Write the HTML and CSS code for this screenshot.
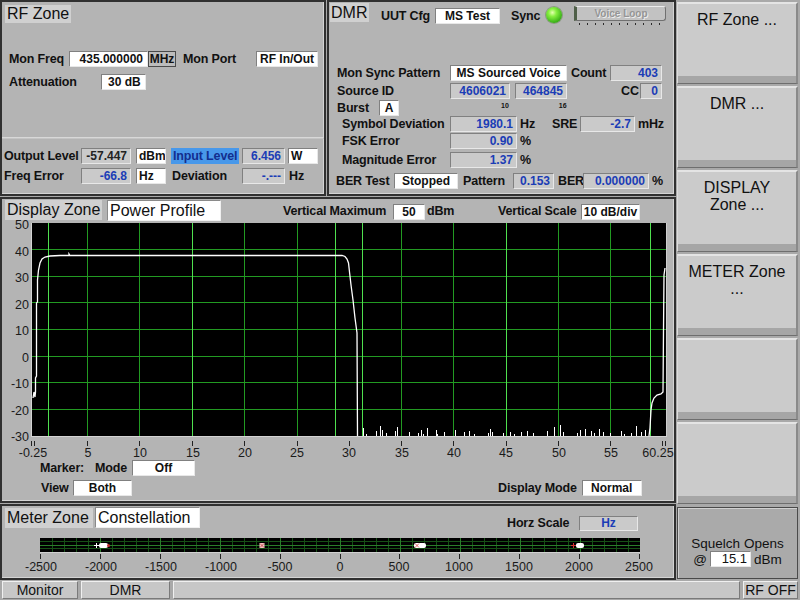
FILE: index.html
```html
<!DOCTYPE html>
<html lang="en">
<head>
<meta charset="utf-8">
<title>DMR Monitor</title>
<link rel="stylesheet" href="styles.css">
</head>
<body>
<div class="screen">
  <div class="leftcol">
    <div class="toprow">
      <section class="panel rf">
        <div class="title t-rf">RF Zone</div>
        <div class="row rf-r1">
          <span class="lbl w60">Mon Freq</span>
          <span class="box white num w79">435.000000</span>
          <span class="unitbtn w28">MHz</span>
          <span class="lbl w73 ml7">Mon Port</span>
          <span class="box white w62">RF In/Out</span>
        </div>
        <div class="row rf-r2">
          <span class="lbl w92">Attenuation</span>
          <span class="box white left6 w45">30 dB</span>
        </div>
        <div class="sep"></div>
        <div class="row rf-r3">
          <span class="lbl w77">Output Level</span>
          <span class="box gray dark w50">-57.447</span>
          <span class="box white left2 w30 ml5">dBm</span>
          <span class="hl w68 ml5">Input Level</span>
          <span class="box gray w43 ml3">6.456</span>
          <span class="box white left2 w30 ml3">W</span>
        </div>
        <div class="row rf-r4">
          <span class="lbl w77">Freq Error</span>
          <span class="box gray w50">-66.8</span>
          <span class="box white left2 w30 ml5">Hz</span>
          <span class="lbl w71 ml5 pl1">Deviation</span>
          <span class="box gray w43">-.---</span>
          <span class="lbl ml4">Hz</span>
        </div>
      </section>

      <section class="panel dmr">
        <div class="dmr-head">
          <div class="title t-dmr">DMR</div>
          <span class="lbl w54 ml12 hd">UUT Cfg</span>
          <span class="box white w65 hd">MS Test</span>
          <span class="lbl w29 ml11 hd">Sync</span>
          <span class="led"></span>
          <div class="vloop">
            <div class="vl-btn">Voice Loop</div>
            <div class="vl-ticks"></div>
          </div>
        </div>
        <div class="row d-a d-r1">
          <span class="lbl w113">Mon Sync Pattern</span>
          <span class="box white w117">MS Sourced Voice</span>
          <span class="lbl w39 ml4">Count</span>
          <span class="box gray w52">403</span>
        </div>
        <div class="row d-a d-r2">
          <span class="lbl w113">Source ID</span>
          <span class="box gray w60">4606021</span>
          <span class="box gray w52 ml5">464845</span>
          <span class="lbl w19 ml54">CC</span>
          <span class="box gray w22">0</span>
        </div>
        <div class="row d-a d-r3">
          <span class="lbl w42">Burst</span>
          <span class="box white w20">A</span>
          <span class="sup sup10">10</span>
          <span class="sup sup16">16</span>
        </div>
        <div class="row d-b d-r4">
          <span class="lbl w108">Symbol Deviation</span>
          <span class="box gray w67">1980.1</span>
          <span class="lbl w32 ml3">Hz</span>
          <span class="lbl w28">SRE</span>
          <span class="box gray w55">-2.7</span>
          <span class="lbl ml3">mHz</span>
        </div>
        <div class="row d-b d-r5">
          <span class="lbl w108">FSK Error</span>
          <span class="box gray w67">0.90</span>
          <span class="lbl ml3">%</span>
        </div>
        <div class="row d-b d-r6">
          <span class="lbl w108">Magnitude Error</span>
          <span class="box gray w67">1.37</span>
          <span class="lbl ml3">%</span>
        </div>
        <div class="row d-c d-r7">
          <span class="lbl w58">BER Test</span>
          <span class="box white w64">Stopped</span>
          <span class="lbl w50 ml5">Pattern</span>
          <span class="box gray w41">0.153</span>
          <span class="lbl w25 ml4">BER</span>
          <span class="box gray w66">0.000000</span>
          <span class="lbl ml3">%</span>
        </div>
      </section>
    </div>

    <section class="panel display">
      <div class="disp-head">
        <div class="title t-disp">Display Zone</div>
        <div class="namebox w114 ml5">Power Profile</div>
        <span class="lbl w110 ml62 hd2">Vertical Maximum</span>
        <span class="box white w32 hd3">50</span>
        <span class="lbl w71 ml2 hd2">dBm</span>
        <span class="lbl w83 hd2">Vertical Scale</span>
        <span class="box white w59 tight hd3">10 dB/div</span>
      </div>
      <svg class="chart" width="672" height="238" viewBox="2 221 672 238">
        <rect x="32" y="223" width="634" height="213" fill="#000"/>
        <line x1="31.5" y1="223" x2="31.5" y2="437" stroke="#d4d4d4"/>
        <line x1="32" y1="436.5" x2="666" y2="436.5" stroke="#d4d4d4"/>
        <line x1="666.5" y1="223" x2="666.5" y2="437" stroke="#cfcfcf"/>
        <g stroke="#229a22" stroke-width="1">
          <line x1="32" y1="249.5" x2="666" y2="249.5"/>
          <line x1="32" y1="276.5" x2="666" y2="276.5"/>
          <line x1="32" y1="302.5" x2="666" y2="302.5"/>
          <line x1="32" y1="329.5" x2="666" y2="329.5"/>
          <line x1="32" y1="356.5" x2="666" y2="356.5"/>
          <line x1="32" y1="382.5" x2="666" y2="382.5"/>
          <line x1="32" y1="409.5" x2="666" y2="409.5"/>
          <line x1="87.5" y1="223" x2="87.5" y2="436"/>
          <line x1="139.5" y1="223" x2="139.5" y2="436"/>
          <line x1="244.5" y1="223" x2="244.5" y2="436"/>
          <line x1="297.5" y1="223" x2="297.5" y2="436"/>
          <line x1="401.5" y1="223" x2="401.5" y2="436"/>
          <line x1="453.5" y1="223" x2="453.5" y2="436"/>
          <line x1="558.5" y1="223" x2="558.5" y2="436"/>
          <line x1="610.5" y1="223" x2="610.5" y2="436"/>
        </g>
        <g stroke="#4fe04f" stroke-width="1">
          <line x1="48.5" y1="223" x2="48.5" y2="436"/>
          <line x1="192.5" y1="223" x2="192.5" y2="436"/>
          <line x1="335.5" y1="223" x2="335.5" y2="436"/>
          <line x1="362.5" y1="223" x2="362.5" y2="436"/>
          <line x1="506.5" y1="223" x2="506.5" y2="436"/>
          <line x1="650.5" y1="223" x2="650.5" y2="436"/>
        </g>
        <polyline fill="none" stroke="#fff" stroke-width="1.3" points="33,398 34,392 35,397 35.5,392 35.5,378 36.5,376 36.5,303 37.5,302 37.5,280 38.5,270 40,263 42,259 45,257 50,256 60,255.5 69,255.5 69,254 70,255.5 200,255.5 342,255.5 345,256.5 347,259 348.5,263 349.5,272 351,285 353,300 355,318 357,333 357.5,436"/>
        <polyline fill="none" stroke="#fff" stroke-width="1.3" points="649,436 650,428 651,410 652,403 654,398 657,395 661,394 663,392 663.5,330 664,275 665,268"/>
        <path fill="none" stroke="#fff" stroke-width="1" d="M363.5 436V428M366.5 436V434M376.5 436V431M380.5 436V426M382.5 436V430M386.5 436V433M395.5 436V431M397.5 436V427M409.5 436V432M418.5 436V433M421.5 436V430M423.5 436V434M427.5 436V428M436.5 436V430M437.5 436V434M444.5 436V432M455.5 436V430M464.5 436V432M469.5 436V431M474.5 436V434M488.5 436V433M490.5 436V429M492.5 436V432M503.5 436V433M510.5 436V432M514.5 436V434M521.5 436V432M527.5 436V431M533.5 436V433M547.5 436V431M554.5 436V427M560.5 436V425M563.5 436V432M577.5 436V433M580.5 436V430M585.5 436V429M591.5 436V431M594.5 436V433M599.5 436V429M603.5 436V432M610.5 436V433M621.5 436V431M624.5 436V434M631.5 436V433M636.5 436V426M641.5 436V432M645.5 436V430"/>
        <g class="ylab" text-anchor="end">
          <text x="29" y="229">50</text>
          <text x="29" y="255.5">40</text>
          <text x="29" y="282">30</text>
          <text x="29" y="308.5">20</text>
          <text x="29" y="335">10</text>
          <text x="29" y="361.5">0</text>
          <text x="29" y="388">-10</text>
          <text x="29" y="414.5">-20</text>
          <text x="29" y="441">-30</text>
        </g>
        <g stroke="#222" stroke-width="1">
          <line x1="31.5" y1="441" x2="31.5" y2="446"/>
          <line x1="34.5" y1="441" x2="34.5" y2="446"/>
          <line x1="87.5" y1="441" x2="87.5" y2="446"/>
          <line x1="139.5" y1="441" x2="139.5" y2="446"/>
          <line x1="192.5" y1="441" x2="192.5" y2="446"/>
          <line x1="244.5" y1="441" x2="244.5" y2="446"/>
          <line x1="297.5" y1="441" x2="297.5" y2="446"/>
          <line x1="349.5" y1="441" x2="349.5" y2="446"/>
          <line x1="401.5" y1="441" x2="401.5" y2="446"/>
          <line x1="453.5" y1="441" x2="453.5" y2="446"/>
          <line x1="506.5" y1="441" x2="506.5" y2="446"/>
          <line x1="558.5" y1="441" x2="558.5" y2="446"/>
          <line x1="610.5" y1="441" x2="610.5" y2="446"/>
          <line x1="662.5" y1="441" x2="662.5" y2="446"/>
          <line x1="665.5" y1="441" x2="665.5" y2="446"/>
        </g>
        <g class="xlab" text-anchor="middle">
          <text x="33" y="457">-0.25</text>
          <text x="88" y="457">5</text>
          <text x="140" y="457">10</text>
          <text x="193" y="457">15</text>
          <text x="245" y="457">20</text>
          <text x="297" y="457">25</text>
          <text x="349" y="457">30</text>
          <text x="402" y="457">35</text>
          <text x="454" y="457">40</text>
          <text x="506" y="457">45</text>
          <text x="559" y="457">50</text>
          <text x="611" y="457">55</text>
          <text x="658" y="457">60.25</text>
        </g>
      </svg>
      <div class="row mk-r1">
        <span class="lbl w55">Marker:</span>
        <span class="lbl w37">Mode</span>
        <span class="box white w63">Off</span>
      </div>
      <div class="row mk-r2">
        <span class="lbl w32">View</span>
        <span class="box white w59">Both</span>
        <span class="lbl w84 ml366">Display Mode</span>
        <span class="box white left8 w60">Normal</span>
      </div>
    </section>

    <section class="panel meter">
      <div class="meter-head">
        <div class="title t-meter">Meter Zone</div>
        <div class="namebox w105 ml2">Constellation</div>
        <span class="lbl w72 ml307 hz-l">Horz Scale</span>
        <span class="box gray center w59 hz-b">Hz</span>
      </div>
      <svg class="mbar" width="672" height="44" viewBox="2 532 672 44">
        <rect x="40" y="538" width="600" height="14" fill="#000"/>
        <g stroke="#164f16" stroke-width="1">
          <line x1="40" y1="541.5" x2="640" y2="541.5"/>
          <line x1="40" y1="548.5" x2="640" y2="548.5"/>
          <path d="M52.5 538v14M64.5 538v14M76.5 538v14M88.5 538v14M112.5 538v14M124.5 538v14M136.5 538v14M148.5 538v14M172.5 538v14M184.5 538v14M196.5 538v14M208.5 538v14M232.5 538v14M244.5 538v14M256.5 538v14M268.5 538v14M292.5 538v14M304.5 538v14M316.5 538v14M328.5 538v14M352.5 538v14M364.5 538v14M376.5 538v14M388.5 538v14M412.5 538v14M424.5 538v14M436.5 538v14M448.5 538v14M472.5 538v14M484.5 538v14M496.5 538v14M508.5 538v14M532.5 538v14M544.5 538v14M556.5 538v14M568.5 538v14M592.5 538v14M604.5 538v14M616.5 538v14M628.5 538v14"/>
        </g>
        <g stroke="#2a7d2a" stroke-width="1">
          <line x1="40" y1="545.5" x2="640" y2="545.5"/>
          <path d="M100.5 538v14M160.5 538v14M220.5 538v14M280.5 538v14M340.5 538v14M400.5 538v14M460.5 538v14M520.5 538v14M580.5 538v14"/>
        </g>
        <line x1="40" y1="552.5" x2="640" y2="552.5" stroke="#d0d0d0"/>
        <rect x="99" y="543" width="9" height="5" rx="2" fill="#fff"/>
        <path d="M94 545.5h5M96.5 543v5" stroke="#fff" stroke-width="1"/>
        <circle cx="108.5" cy="545.5" r="1.5" fill="#c03030"/>
        <rect x="259.5" y="543" width="5" height="5" fill="#f2c4c4"/>
        <path d="M260 543.5l4 4M264 543.5l-4 4" stroke="#c04040" stroke-width="0.8"/>
        <rect x="414" y="543" width="12" height="5" rx="2" fill="#fff"/>
        <path d="M415 543.5l4 4M419 543.5l-4 4" stroke="#d04040" stroke-width="0.8"/>
        <rect x="576" y="543" width="8" height="5" rx="2" fill="#fff"/>
        <path d="M571 545.5h5M573.5 543v5" stroke="#d03030" stroke-width="1"/>
        <g stroke="#222" stroke-width="1">
          <path d="M40.5 554v5M100.5 554v5M160.5 554v5M220.5 554v5M280.5 554v5M340.5 554v5M399.5 554v5M459.5 554v5M519.5 554v5M579.5 554v5M639.5 554v5"/>
        </g>
        <g class="xlab" text-anchor="middle">
          <text x="41" y="571">-2500</text>
          <text x="101" y="571">-2000</text>
          <text x="161" y="571">-1500</text>
          <text x="221" y="571">-1000</text>
          <text x="280" y="571">-500</text>
          <text x="340" y="571">0</text>
          <text x="399" y="571">500</text>
          <text x="459" y="571">1000</text>
          <text x="519" y="571">1500</text>
          <text x="579" y="571">2000</text>
          <text x="639" y="571">2500</text>
        </g>
      </svg>
    </section>
  </div>

  <div class="rightcol">
    <div class="btn">RF Zone ...</div>
    <div class="btn">DMR ...</div>
    <div class="btn">DISPLAY<br>Zone ...</div>
    <div class="btn">METER Zone<br>...</div>
    <div class="btn"></div>
    <div class="btn"></div>
    <div class="squelch">
      <div class="sq-l1">Squelch Opens</div>
      <div class="sq-l2"><span>@</span><span class="box white sqbox">15.1</span><span>dBm</span></div>
    </div>
  </div>

  <div class="status">
    <div class="cell c-mon">Monitor</div>
    <div class="cell c-dmr">DMR</div>
    <div class="cell c-fill"></div>
    <div class="cell c-rf">RF OFF</div>
  </div>
</div>
</body>
</html>
```

FILE: styles.css
```css
* { box-sizing: border-box; margin: 0; padding: 0; }
html, body { width: 800px; height: 600px; overflow: hidden; }
body {
  background: #a9a9a9;
  font-family: "Liberation Sans", Arial, sans-serif;
  color: #111;
}
.screen {
  display: grid;
  grid-template-columns: 676px 124px;
  grid-template-rows: 580px 20px;
  width: 800px;
  height: 600px;
}
.leftcol { display: flex; flex-direction: column; gap: 1px; }
.toprow { display: flex; gap: 1px; height: 196px; }

.panel {
  background: #b4b4b4;
  border: 2px solid #303030;
  box-shadow: inset -1px -1px 0 #d4d4d4;
  display: flex;
  flex-direction: column;
  overflow: hidden;
}
.rf { width: 326px; height: 196px; }
.dmr { width: 349px; height: 196px; }
.display { height: 306px; }
.meter { height: 76px; }

.title {
  align-self: flex-start;
  background: #d0d0d0;
  font-size: 16px;
  padding: 0 2px;
  white-space: nowrap;
}
.t-rf { margin: 3px 0 0 3px; height: 18px; line-height: 18px; width: 66px; }
.t-dmr { margin: 1px 0 0 1px; height: 19px; line-height: 19px; width: 39px; padding: 0 1px; }
.t-disp { margin: 1px 0 0 3px; height: 20px; line-height: 20px; width: 97px; }
.t-meter { margin: 2px 0 0 3px; height: 20px; line-height: 20px; width: 88px; }

.row { display: flex; align-items: center; height: 16px; white-space: nowrap; flex: none; }
.lbl {
  font-size: 12.5px;
  letter-spacing: -0.15px;
  font-weight: bold;
  line-height: 16px;
  white-space: nowrap;
  flex: none;
}
.box {
  flex: none;
  height: 16px;
  line-height: 14px;
  font-size: 12px;
  font-weight: bold;
  border: 1px solid;
  border-color: #808080 #e8e8e8 #e8e8e8 #808080;
  padding: 0 3px;
  overflow: hidden;
  white-space: nowrap;
}
.white { background: #fff; text-align: center; color: #111; }
.gray { background: #cacaca; color: #1b3db6; text-align: right; }
.gray.dark { color: #222; }
.gray.center { text-align: center; }
.num { text-align: right; padding-right: 4px; }
.left6 { text-align: left; padding-left: 6px; }
.left2 { text-align: left; padding-left: 2px; }
.left8 { text-align: left; padding-left: 8px; }
.tight { padding: 0 1px; }

.unitbtn {
  flex: none;
  height: 16px;
  line-height: 14px;
  font-size: 12px;
  font-weight: bold;
  border: 1px solid #4a4a4a;
  background: #bcbcbc;
  text-align: center;
}
.hl {
  flex: none;
  height: 16px;
  line-height: 16px;
  background: #4898ea;
  color: #132e8e;
  font-size: 12.5px;
  letter-spacing: -0.15px;
  font-weight: bold;
  padding-left: 2px;
  white-space: nowrap;
}
.namebox {
  flex: none;
  margin-top: 1px;
  height: 21px;
  line-height: 19px;
  background: #fff;
  border: 1px solid;
  border-color: #8a8a8a #f0f0f0 #f0f0f0 #8a8a8a;
  font-size: 16px;
  padding-left: 2px;
  white-space: nowrap;
}

.sep {
  flex: none;
  margin-top: 47px;
  height: 2px;
  border-top: 1px solid #d8d8d8;
  border-bottom: 1px solid #c4c4c4;
}

/* widths */
.w19 { width: 19px; } .w20 { width: 20px; } .w22 { width: 22px; }
.w25 { width: 25px; } .w28 { width: 28px; } .w29 { width: 29px; }
.w30 { width: 30px; } .w32 { width: 32px; } .w37 { width: 37px; }
.w39 { width: 39px; } .w41 { width: 41px; } .w42 { width: 42px; }
.w43 { width: 43px; } .w45 { width: 45px; } .w50 { width: 50px; }
.w52 { width: 52px; } .w54 { width: 54px; } .w55 { width: 55px; }
.w58 { width: 58px; } .w59 { width: 59px; } .w60 { width: 60px; }
.w62 { width: 62px; } .w63 { width: 63px; } .w64 { width: 64px; }
.w65 { width: 65px; } .w66 { width: 66px; } .w67 { width: 67px; }
.w68 { width: 68px; } .w71 { width: 71px; } .w72 { width: 72px; }
.w73 { width: 73px; } .w77 { width: 77px; } .w79 { width: 79px; }
.w83 { width: 83px; } .w84 { width: 84px; } .w92 { width: 92px; }
.w105 { width: 105px; } .w108 { width: 108px; } .w110 { width: 110px; }
.w113 { width: 113px; } .w114 { width: 114px; } .w117 { width: 117px; }

/* margins */
.ml2 { margin-left: 2px; } .ml3 { margin-left: 3px; } .ml4 { margin-left: 4px; }
.ml5 { margin-left: 5px; } .ml7 { margin-left: 7px; } .ml11 { margin-left: 11px; }
.ml12 { margin-left: 12px; } .ml54 { margin-left: 54px; } .ml62 { margin-left: 62px; }
.ml307 { margin-left: 307px; } .ml366 { margin-left: 366px; }
.pl1 { padding-left: 1px; }

/* RF rows */
.rf-r1 { margin-top: 28px; padding-left: 7px; }
.rf-r2 { margin-top: 7px; padding-left: 7px; }
.rf-r3 { margin-top: 9px; padding-left: 2px; }
.rf-r4 { margin-top: 4px; padding-left: 2px; }

/* DMR */
.dmr-head { display: flex; align-items: flex-start; height: 23px; flex: none; }
.hd { margin-top: 6px; }
.led {
  flex: none;
  width: 16px;
  height: 16px;
  margin: 5px 0 0 6px;
  border-radius: 50%;
  background: radial-gradient(circle at 40% 35%, #e4ffb0 0, #86ef40 28%, #3fb51a 68%, #2a7c12 100%);
  box-shadow: 0 0 0 1px #8a9a80;
}
.vloop { flex: none; width: 92px; margin: 4px 0 0 12px; }
.vl-btn {
  height: 15px;
  line-height: 13px;
  background: #c2c2c2;
  border: 1px solid;
  border-color: #ececec #707070 #707070 #ececec;
  border-left: 3px solid #4f5f48;
  font-size: 10px;
  font-weight: bold;
  color: #959595;
  text-shadow: 1px 1px 0 #ececec;
  text-align: center;
  border-radius: 0 3px 3px 0;
}
.vl-ticks {
  height: 5px;
  background: repeating-linear-gradient(90deg, #2a2a2a 0 1px, transparent 1px 8px) 5px 2px / 86px 2px no-repeat;
}
.d-a { padding-left: 8px; }
.d-b { padding-left: 13px; }
.d-c { padding-left: 7px; }
.d-r1 { margin-top: 40px; }
.d-r2 { margin-top: 2px; }
.d-r3 { margin-top: 1px; align-items: flex-start; }
.d-r4 { margin-top: 0; }
.d-r5 { margin-top: 1px; }
.d-r6 { margin-top: 3px; }
.d-r7 { margin-top: 5px; }
.sup { font-size: 7px; font-weight: bold; line-height: 7px; margin-top: 2px; flex: none; }
.sup10 { margin-left: 102px; }
.sup16 { margin-left: 50px; }

/* Display */
.disp-head { display: flex; align-items: flex-start; height: 22px; flex: none; }
.hd2 { margin-top: 4px; }
.hd3 { margin-top: 5px; }
.chart { display: block; flex: none; overflow: visible; }
.ylab text, .xlab text { font-family: "Liberation Sans", Arial, sans-serif; font-size: 12.5px; fill: #1a1a1a; }
.mk-r1 { margin-top: 1px; padding-left: 38px; }
.mk-r2 { margin-top: 4px; padding-left: 39px; }

/* Meter */
.meter-head { display: flex; align-items: flex-start; height: 26px; flex: none; }
.hz-l { margin-top: 9px; }
.hz-b { margin-top: 10px; height: 15px; line-height: 13px; }
.mbar { display: block; flex: none; }

/* Right column */
.rightcol { display: flex; flex-direction: column; padding-left: 1px; }
.btn {
  flex: none;
  width: 121px;
  height: 82px;
  margin-top: 2px;
  background: linear-gradient(to bottom, #cbcbcb calc(100% - 7px), #a6a6a6 calc(100% - 7px));
  border-top: 2px solid #e4e4e4;
  border-left: 1px solid #dcdcdc;
  border-right: 2px solid #8a8a8a;
  border-bottom: 1px solid #6e6e6e;
  text-align: center;
  font-size: 16px;
  line-height: 17px;
  padding-top: 7px;
  color: #111;
}
.squelch {
  flex: none;
  width: 121px;
  height: 72px;
  margin-top: 3px;
  background: #aaaaaa;
  border: 1px solid #4a4a4a;
  box-shadow: inset 1px 1px 0 #d0d0d0;
  padding-top: 28px;
  text-align: center;
  font-size: 13.5px;
}
.sq-l1 { line-height: 15px; }
.sq-l2 { display: flex; justify-content: center; align-items: center; gap: 3px; height: 16px; }
.sqbox { width: 41px; font-weight: normal; font-size: 13px; text-align: right; padding-right: 3px; }

/* Status bar */
.status {
  grid-column: 1 / 3;
  display: flex;
  gap: 3px;
  padding: 1px 2px 1px 2px;
}
.cell {
  flex: none;
  height: 18px;
  line-height: 16px;
  background: #c7c7c7;
  border: 1px solid;
  border-color: #f0f0f0 #7a7a7a #7a7a7a #f0f0f0;
  text-align: center;
  font-size: 14px;
}
.c-mon { width: 76px; }
.c-dmr { width: 89px; }
.c-fill { width: 567px; }
.c-rf { width: 55px; }
```
